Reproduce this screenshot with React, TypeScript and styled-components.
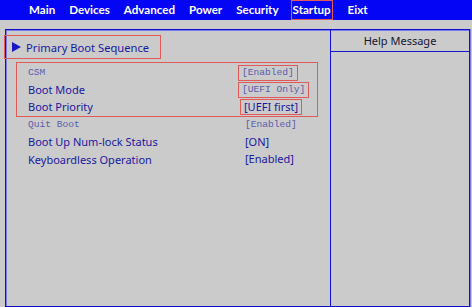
import React from "react";
import styled, { createGlobalStyle } from "styled-components";

const Global = createGlobalStyle`
  html, body { margin: 0; padding: 0; background: #cbcbcb; }
  body { width: 472px; height: 307px; overflow: hidden; }
`;

const Screen = styled.div`
  width: 472px;
  height: 307px;
  display: flex;
  flex-direction: column;
  background: #cbcbcb;
  font-family: "Noto Sans", "Open Sans", sans-serif;
`;

const MenuBar = styled.div`
  height: 20px;
  background: #0505f5;
  display: flex;
  align-items: center;
  gap: 12px;
  padding-left: 28px;
`;

const MenuItem = styled.div<{ $active?: boolean }>`
  color: #ffffff;
  font-family: Lato, "Noto Sans", sans-serif;
  font-weight: 700;
  font-size: 11.6px;
  line-height: 18px;
  padding: 0 1px;
  outline: ${(p) => (p.$active ? "1.5px solid #e05a5a" : "none")};
  margin-right: ${(p) => (p.$active ? "3px" : "0")};
`;

const Panel = styled.div`
  margin: 9px 2px 0 5px;
  flex: 1;
  display: grid;
  grid-template-columns: 325px 1fr;
  border: 1px solid #1010c8;
  box-shadow: inset 1px 1px 0 #7a7aee, 0 1px 0 #7a7aee, 1px 0 0 #7a7aee;
`;

const Main = styled.div`
  border-right: 1.5px solid #1010c8;
  display: flex;
  flex-direction: column;
  padding-top: 6px;
`;

const Side = styled.div`
  display: flex;
  flex-direction: column;
`;

const SideHeader = styled.div`
  height: 21px;
  border-bottom: 1.5px solid #1515d0;
  display: flex;
  align-items: center;
  justify-content: center;
  font-size: 11px;
  color: #151530;
`;

const Section = styled.div`
  display: flex;
  align-items: center;
  gap: 5px;
  height: 22px;
  margin-left: -1px;
  width: 155px;
  padding-left: 7px;
  box-sizing: border-box;
  outline: 1.5px solid #e05a5a;
  color: #1818a0;
  font-size: 11.2px;
`;

const Triangle = styled.span`
  width: 0;
  height: 0;
  border-top: 5px solid transparent;
  border-bottom: 5px solid transparent;
  border-left: 9px solid #1818c0;
`;

const Group = styled.div<{ $marked?: boolean }>`
  margin: ${(p) => (p.$marked ? "5px 13px 0 11px" : "0 13px 0 11px")};
  padding: ${(p) => (p.$marked ? "1px 0" : "0")};
  outline: ${(p) => (p.$marked ? "1.5px solid #e05a5a" : "none")};
  display: flex;
  flex-direction: column;
`;

const Row = styled.div`
  height: 17.1px;
  display: grid;
  grid-template-columns: 214px auto;
  align-items: center;
  padding-left: 11px;
`;

const Label = styled.span<{ $mono?: boolean }>`
  font-family: ${(p) =>
    p.$mono ? '"Liberation Mono", "DejaVu Sans Mono", monospace' : '"Noto Sans", "Open Sans", sans-serif'};
  font-size: ${(p) => (p.$mono ? "9.6px" : "11px")};
  color: ${(p) => (p.$mono ? "#5c5cac" : "#1818a0")};
  white-space: nowrap;
`;

const Value = styled.span<{ $mono?: boolean; $marked?: boolean; $shift?: number }>`
  justify-self: start;
  font-family: ${(p) =>
    p.$mono ? '"Liberation Mono", "DejaVu Sans Mono", monospace' : '"Noto Sans", "Open Sans", sans-serif'};
  font-size: ${(p) => (p.$mono ? "9.6px" : "11px")};
  color: ${(p) => (p.$mono ? "#5c5cac" : "#1818a0")};
  white-space: nowrap;
  padding: 0 3px;
  margin-left: ${(p) => p.$shift ?? 0}px;
  outline: ${(p) => (p.$marked ? "1.5px solid #e05a5a" : "none")};
  line-height: 14px;
`;

type Item = {
  label: string;
  value: string;
  monoLabel?: boolean;
  monoValue?: boolean;
  marked?: boolean;
  shift?: number;
};

const marked: Item[] = [
  { label: "CSM", value: "[Enabled]", monoLabel: true, monoValue: true, marked: true, shift: -3 },
  { label: "Boot Mode", value: "[UEFI Only]", monoValue: true, marked: true, shift: -3 },
  { label: "Boot Priority", value: "[UEFI first]", marked: true, shift: -1 },
];

const rest: Item[] = [
  { label: "Quit Boot", value: "[Enabled]", monoLabel: true, monoValue: true },
  { label: "Boot Up Num-lock Status", value: "[ON]" },
  { label: "Keyboardless Operation", value: "[Enabled]" },
];

const renderRow = (it: Item) => (
  <Row key={it.label}>
    <Label $mono={it.monoLabel}>{it.label}</Label>
    <Value $mono={it.monoValue} $marked={it.marked} $shift={it.shift}>
      {it.value}
    </Value>
  </Row>
);

export default function App() {
  const menus = ["Main", "Devices", "Advanced", "Power", "Security", "Startup", "Eixt"];
  return (
    <>
      <Global />
      <Screen>
        <MenuBar>
          {menus.map((m) => (
            <MenuItem key={m} $active={m === "Startup"}>
              {m}
            </MenuItem>
          ))}
        </MenuBar>
        <Panel>
          <Main>
            <Section>
              <Triangle />
              Primary Boot Sequence
            </Section>
            <Group $marked>{marked.map(renderRow)}</Group>
            <Group>{rest.map(renderRow)}</Group>
          </Main>
          <Side>
            <SideHeader>Help Message</SideHeader>
          </Side>
        </Panel>
      </Screen>
    </>
  );
}
